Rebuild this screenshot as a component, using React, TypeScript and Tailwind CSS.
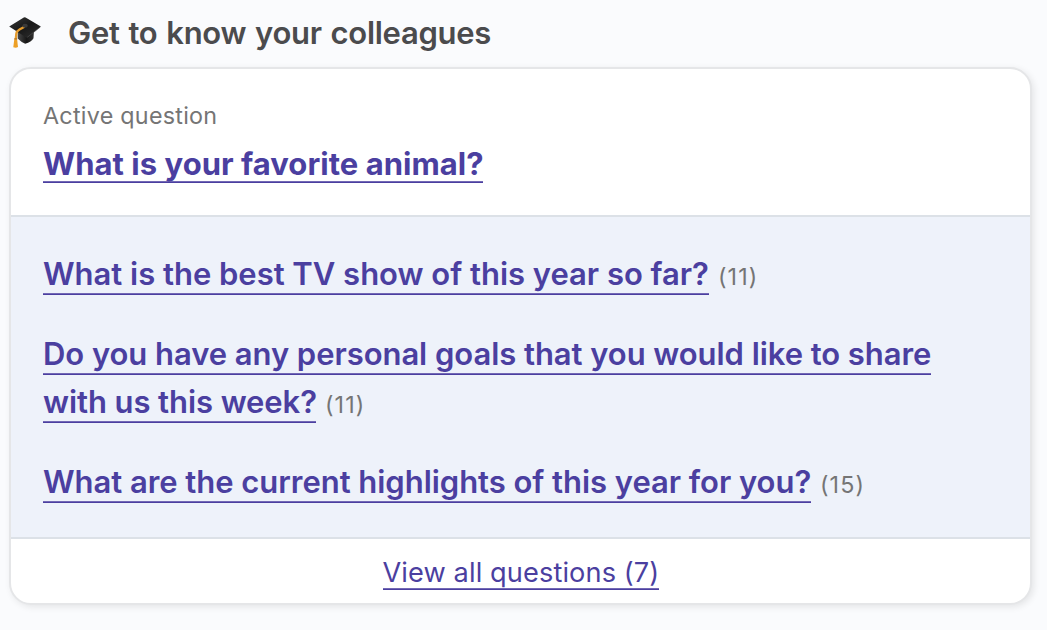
import React from 'react';

function Cap() {
  return (
    <svg className="block h-8 w-8 shrink-0" viewBox="0 0 32 32">
      <defs>
        <linearGradient id="board" x1="0" y1="0" x2="1" y2="1">
          <stop offset="0" stopColor="#383838" />
          <stop offset="0.5" stopColor="#191919" />
          <stop offset="1" stopColor="#303030" />
        </linearGradient>
        <linearGradient id="skull" x1="0" y1="0" x2="1" y2="0">
          <stop offset="0" stopColor="#484848" />
          <stop offset="0.55" stopColor="#161616" />
          <stop offset="1" stopColor="#333333" />
        </linearGradient>
      </defs>
      <path d="M8.7 15v7.500q3.300 3.500 7.500 5.200 6.300-1.800 8.300-5.500l.5-8.700z" fill="url(#skull)" />
      <path d="M.2 10.500 14.800 1.500q.9-.5 1.800 0l14.800 8.700q.5.400 0 .8L18.700 21.200q-.9.700-1.900.1z" fill="url(#board)" />
      <path d="m18.300 21.300 13-10.300" fill="none" stroke="#555555" strokeWidth=".6" />
      <path d="M15.500 10.800 10.500 13.500Q7.700 15 7.300 17.700L6.800 23" fill="none" stroke="#e49b2d" strokeWidth="2.300" />
      <ellipse cx="16.100" cy="9.800" rx="2.700" ry="2" fill="#3a3a3a" />
      <path d="M5.300 23.200q1.300-.8 2.800 0l.9 7.700q-2 1.300-4.700.3z" fill="#eda026" />
      <path d="M5.200 22.900h3" stroke="#a96c22" strokeWidth="1.100" />
    </svg>
  );
}

type LinkProps = { text: string; width: string };

const questions = [
  { lines: [{ text: 'What is the best TV show of this year so far?', width: 'w-[666px] tracking-[-0.02px]' }], count: '(11)' },
  { lines: [{ text: 'Do you have any personal goals that you would like to share', width: 'w-[888px] tracking-[-0.055px]' }, { text: 'with us this week?', width: 'w-[273px] tracking-[-0.08px]' }], count: '(11)' },
  { lines: [{ text: 'What are the current highlights of this year for you?', width: 'w-[768px] tracking-[-0.04px]' }], count: '(15)' },
];

function QuestionLink({ text, width }: LinkProps) {
  return <a href="#" className={`${width} block h-[40px] shrink-0 whitespace-nowrap border-b border-[#7369b5] text-[31px] leading-[40px] font-[560] text-[#4b3fa0] shadow-[0_1px_0_#4b3fa0]`}>{text}</a>;
}

export default function App() {
  return (
    <main className="h-[630px] w-[1047px] overflow-hidden bg-[#fafbfd] px-[9px] pt-4 font-['Inter',sans-serif]">
      <header className="flex h-[51px] gap-[27px]">
        <Cap />
        <h1 className="text-[31px] leading-[34px] font-[560] tracking-[-0.28px] [word-spacing:1.3px] text-[#4b4b4d]">Get to know your colleagues</h1>
      </header>
      <section className="h-[538px] w-[1023px] overflow-hidden rounded-[22px] border-2 border-[#e5e6e8] bg-white shadow-[2px_2px_7px_rgba(0,0,0,0.09)]">
        <div className="h-[146px] px-8 pt-[30px]">
          <p className="text-[23.3px] leading-[34px] tracking-[0.27px] text-[#757575]">Active question</p>
          <a href="#" className="mt-[8px] block h-[41px] w-[440px] whitespace-nowrap border-b border-[#7369b5] text-[31px] leading-[46px] font-[660] tracking-[0.03px] text-[#4b3fa0] shadow-[0_1px_0_#4b3fa0]">What is your favorite animal?</a>
        </div>
        <div className="flex h-[324px] flex-col gap-[39px] border-y-2 border-[#dce1e7] bg-[#eef2fa] px-8 pt-[37px]">
          {questions.map((q) => (
            <div key={q.lines[0].text} className="flex flex-col gap-[7px]">
              {q.lines.map((line, i) => (
                <div key={line.text} className="flex h-[41px] gap-[9px]">
                  <QuestionLink {...line} />
                  {i === q.lines.length - 1 && <span className="text-[23.3px] leading-[46px] tracking-[1.1px] text-[#757575]">{q.count}</span>}
                </div>
              ))}
            </div>
          ))}
        </div>
        <footer className="flex justify-center pt-[14px]">
          <a href="#" className="block h-[36px] w-[276px] whitespace-nowrap border-b border-[#7369b5] text-[27.2px] leading-[39px] font-[430] tracking-[0.1px] text-[#4b3fa0] shadow-[0_1px_0_#4b3fa0]">View all questions (7)</a>
        </footer>
      </section>
    </main>
  );
}
